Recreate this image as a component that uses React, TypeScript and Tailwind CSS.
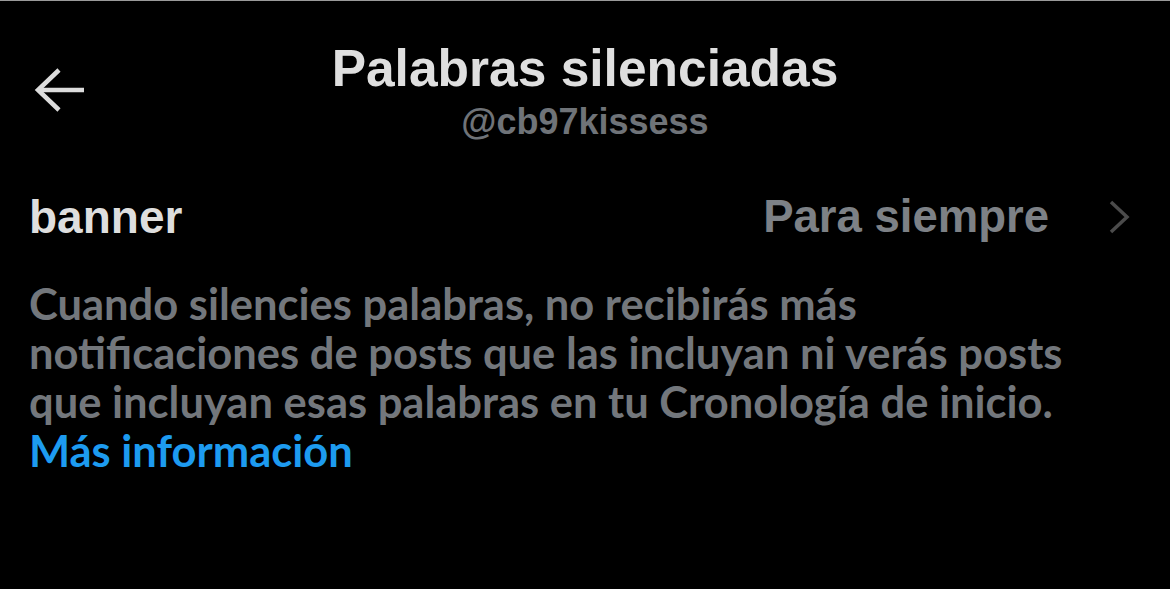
export default function App() {
  return (
    <main className="min-h-[589px] w-full bg-black border-t border-[#9a9a9a] font-['Lato','Liberation_Sans',sans-serif]">
      <header className="relative flex flex-col items-center pt-[37px]">
        <button className="absolute left-[34px] top-[66px] text-[#dcdcdc]">
          <svg width="52" height="46" viewBox="0 0 52 46" fill="none" stroke="currentColor" strokeWidth="4.5">
            <path d="M50 23H4" />
            <path d="M25 3L4 23l21 20" />
          </svg>
        </button>
        <h1 className="font-['Liberation_Sans',sans-serif] text-[51.5px] font-bold leading-[60px] text-[#dfdfdf]">
          Palabras silenciadas
        </h1>
        <span className="font-['Liberation_Sans',sans-serif] text-[36px] font-bold leading-[48px] text-[#6f7378]">
          @cb97kissess
        </span>
      </header>

      <div className="flex items-center px-[29px] pt-[43px]">
        <span className="font-['Liberation_Sans',sans-serif] text-[46px] font-bold leading-[56px] text-[#dedede]">banner</span>
        <span className="ml-auto font-['Liberation_Sans',sans-serif] text-[45.5px] font-bold leading-[56px] text-[#7d8186]">
          Para siempre
        </span>
        <svg className="ml-[59px] mr-[11px]" width="22" height="34" viewBox="0 0 22 34" fill="none" stroke="#4b4b4b" strokeWidth="3.5">
          <path d="M3 2l16 15L3 32" />
        </svg>
      </div>

      <p className="px-[29px] pt-[34px] text-[43.5px] font-bold leading-[49px] text-[#73777c]">
        Cuando silencies palabras, no recibirás más
        <br />
        notificaciones de posts que las incluyan ni verás posts
        <br />
        que incluyan esas palabras en tu Cronología de inicio.
        <br />
        <a className="text-[#1d9bf0]">Más información</a>
      </p>
    </main>
  );
}
